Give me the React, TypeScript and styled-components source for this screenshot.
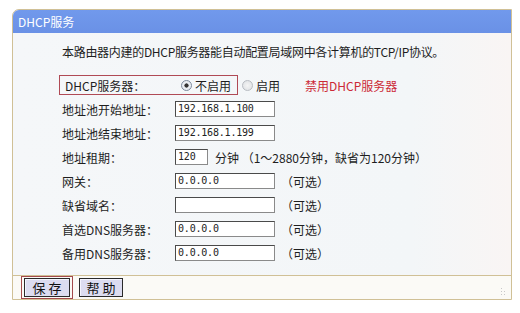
import styled, { createGlobalStyle } from 'styled-components'

const GlobalStyle = createGlobalStyle`
  body {
    margin: 0;
    background: #ffffff;
    font-family: "Noto Sans CJK SC", "Noto Sans", sans-serif;
    color: #1e1e1e;
  }
`

const Page = styled.div`
  width: 520px;
  height: 313px;
  padding: 9px 8px 0 12px;
  box-sizing: border-box;
`

const Panel = styled.div`
  width: 500px;
  height: 291px;
  box-sizing: border-box;
  border: 1px solid #d0c096;
  border-top-left-radius: 7px;
  overflow: hidden;
  display: flex;
  flex-direction: column;
  background: #fbfaf6;
`

const Header = styled.div`
  height: 23px;
  line-height: 23px;
  padding-left: 5px;
  background: linear-gradient(#7199ec, #6a91e6);
  color: #ffffff;
  font-size: 12px;
`

const Body = styled.div`
  padding: 12px 0 10px 49px;
  border-bottom: 1px solid #d0c096;
  background: linear-gradient(90deg, #f5f7f9 0%, #f3f6f8 80%, #f9f5f4 100%);
`

const Description = styled.div`
  height: 14px;
  line-height: 14px;
  font-size: 12px;
  letter-spacing: -0.3px;
  margin-bottom: 14px;
`

const Row = styled.div`
  height: 24px;
  display: flex;
  align-items: center;
  font-size: 12px;
`

const Label = styled.div<{ $width?: number }>`
  width: ${p => p.$width ?? 113}px;
  flex: none;
`

const RedBox = styled.div`
  height: 20px;
  box-sizing: border-box;
  margin-left: -3px;
  padding: 0 6px 0 5px;
  border: 1px solid #b04a55;
  display: flex;
  align-items: center;
`

const Radio = styled.span<{ $checked?: boolean; $gap?: number }>`
  width: 11px;
  height: 11px;
  box-sizing: border-box;
  border-radius: 50%;
  margin: 0 3px 0 ${p => p.$gap ?? 0}px;
  border: 1px solid ${p => (p.$checked ? '#7d8a9c' : '#b8bcc2')};
  background: ${p =>
    p.$checked
      ? 'radial-gradient(circle, #333 0 1.8px, #e9edf2 2.4px)'
      : 'radial-gradient(circle, #f4f4f4 0, #dcdfe3 100%)'};
  flex: none;
`

const Hint = styled.span<{ $gap?: number; $color?: string }>`
  margin-left: ${p => p.$gap ?? 0}px;
  color: ${p => p.$color ?? 'inherit'};
  white-space: nowrap;
`

const Field = styled.div<{ $width?: number }>`
  width: ${p => p.$width ?? 100}px;
  height: 16px;
  box-sizing: border-box;
  border: 1px solid #8a8a8a;
  border-top-color: #4a4a4a;
  border-left-color: #4a4a4a;
  background: #ffffff;
  padding-left: 2px;
  font-family: "DejaVu Sans Mono", monospace;
  font-size: 10px;
  letter-spacing: -0.2px;
  line-height: 14px;
  color: #222;
  flex: none;
`

const ButtonBar = styled.div`
  flex: 1;
  display: flex;
  align-items: center;
  padding: 0 4px 0 8px;
  gap: 6px;
`

const FocusFrame = styled.span`
  display: flex;
  padding: 1px 2px;
  border: 1px solid #a34a4c;
`

const Button = styled.button<{ $width: number }>`
  width: ${p => p.$width}px;
  height: 19px;
  padding: 0;
  box-sizing: border-box;
  border: 1px solid #2a2a2a;
  box-shadow: inset 1px 1px #f4f4ff;
  background: #dcdcf0;
  font-family: "Noto Sans CJK SC", sans-serif;
  font-size: 13px;
  line-height: 16px;
  color: #111;
  letter-spacing: 3px;
  text-indent: 3px;
`

const Grip = styled.svg`
  margin-left: auto;
  margin-top: 8px;
`

const fields = [
  { label: '地址池开始地址：', value: '192.168.1.100' },
  { label: '地址池结束地址：', value: '192.168.1.199' },
]

const optional = [
  { label: '网关：', value: '0.0.0.0' },
  { label: '缺省域名：', value: '' },
  { label: '首选DNS服务器：', value: '0.0.0.0' },
  { label: '备用DNS服务器：', value: '0.0.0.0' },
]

export default function App() {
  return (
    <>
      <GlobalStyle />
      <Page>
        <Panel>
          <Header>DHCP服务</Header>
          <Body>
            <Description>本路由器内建的DHCP服务器能自动配置局域网中各计算机的TCP/IP协议。</Description>
            <Row>
              <RedBox>
                <Label $width={114}>DHCP服务器：</Label>
                <Radio $checked $gap={2} />
                <span>不启用</span>
              </RedBox>
              <Radio $gap={4} />
              <span>启用</span>
              <Hint $gap={25} $color="#cc2a36">禁用DHCP服务器</Hint>
            </Row>
            {fields.map(f => (
              <Row key={f.label}>
                <Label>{f.label}</Label>
                <Field>{f.value}</Field>
              </Row>
            ))}
            <Row>
              <Label>地址租期：</Label>
              <Field $width={33}>120</Field>
              <Hint $gap={7}>分钟 （1～2880分钟，缺省为120分钟）</Hint>
            </Row>
            {optional.map(f => (
              <Row key={f.label}>
                <Label>{f.label}</Label>
                <Field>{f.value}</Field>
                <Hint $gap={6}>（可选）</Hint>
              </Row>
            ))}
          </Body>
          <ButtonBar>
            <FocusFrame>
              <Button $width={46}>保存</Button>
            </FocusFrame>
            <Button $width={44}>帮助</Button>
            <Grip width="6" height="8" viewBox="0 0 6 8">
              <rect x="0" y="0" width="1" height="1" fill="#c8c8c8" />
              <rect x="0" y="3" width="1" height="1" fill="#c8c8c8" />
              <rect x="0" y="6" width="1" height="1" fill="#c8c8c8" />
              <rect x="3" y="3" width="1" height="1" fill="#c8c8c8" />
              <rect x="3" y="6" width="1" height="1" fill="#c8c8c8" />
            </Grip>
          </ButtonBar>
        </Panel>
      </Page>
    </>
  )
}
